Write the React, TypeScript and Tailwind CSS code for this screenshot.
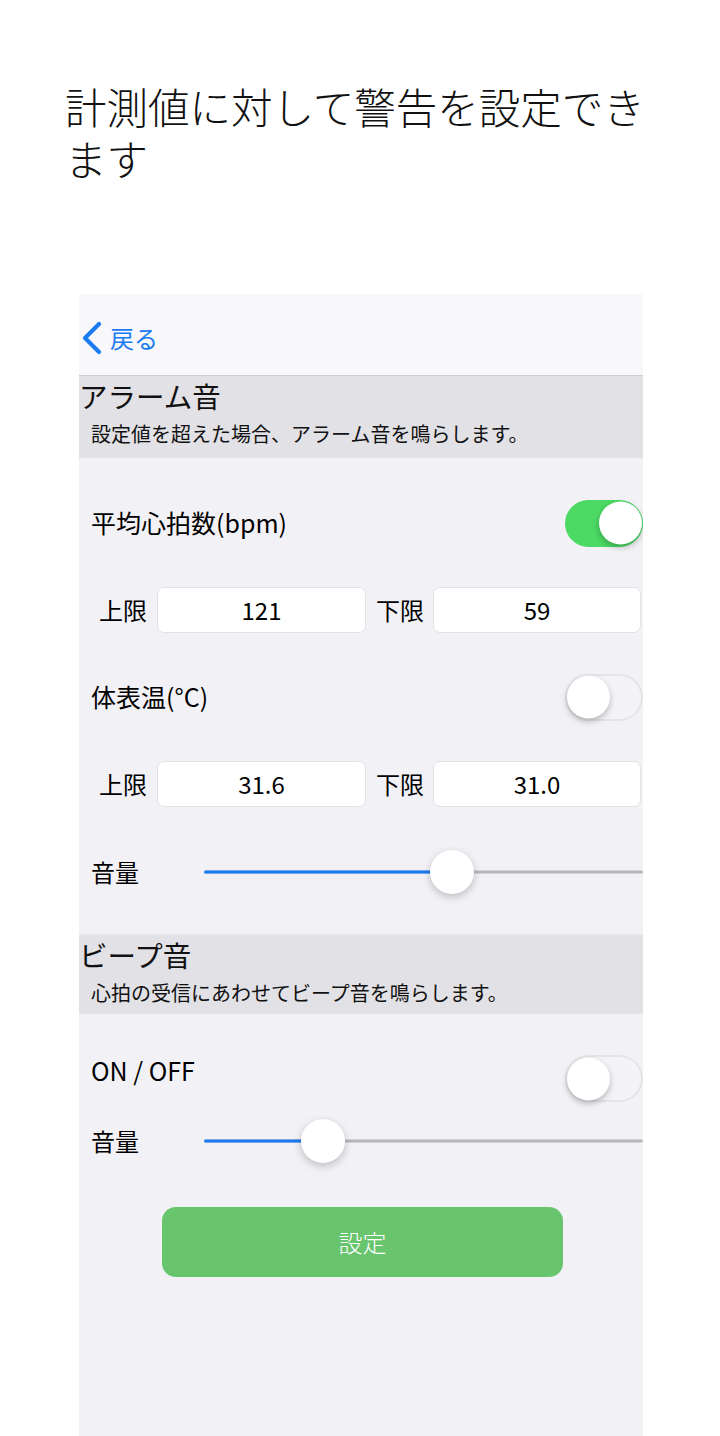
import React from 'react';

const font = { fontFamily: '"Noto Sans CJK JP", "Noto Sans", sans-serif' };

function Toggle({ on }: { on: boolean }) {
  return (
    <div
      className={`relative h-[47px] w-[78px] shrink-0 rounded-full ${
        on ? 'bg-[#4cd964]' : 'border-2 border-[#e5e4e9] bg-[#f4f3f7]'
      }`}
    >
      <div
        className={`absolute top-1/2 h-[43px] w-[43px] -translate-y-1/2 rounded-full bg-white shadow-[0_3px_6px_rgba(0,0,0,0.25)] ${
          on ? 'right-[1px]' : 'left-0'
        }`}
      />
    </div>
  );
}

function Slider({ value }: { value: number }) {
  return (
    <div className="relative h-[46px] flex-1">
      <div className="absolute left-0 right-0 top-1/2 h-[3px] -translate-y-1/2 rounded-full bg-[#b7b6ba]" />
      <div
        className="absolute left-0 top-1/2 h-[3px] -translate-y-1/2 rounded-full bg-[#1a7bf3]"
        style={{ width: `${value * 100}%` }}
      />
      <div
        className="absolute top-1/2 h-[44px] w-[44px] -translate-x-1/2 -translate-y-1/2 rounded-full bg-white shadow-[0_3px_8px_rgba(0,0,0,0.22)]"
        style={{ left: `${value * 100}%` }}
      />
    </div>
  );
}

function LimitRow({ upper, lower }: { upper: string; lower: string }) {
  return (
    <div className="flex h-[46px] items-center pl-[20px] pr-[2px] text-[24px] text-black">
      <span className="w-[49px]">上限</span>
      <div className="ml-[9px] flex h-[46px] w-[209px] items-center justify-center rounded-[7px] border border-[#e2e1e5] bg-white">
        {upper}
      </div>
      <span className="ml-[10px] w-[48px]">下限</span>
      <div className="ml-[9px] flex h-[46px] flex-1 items-center justify-center rounded-[7px] border border-[#e2e1e5] bg-white">
        {lower}
      </div>
    </div>
  );
}

function SectionHeader({ title, note, height }: { title: string; note: string; height: string }) {
  return (
    <div className={`flex flex-col bg-[#e2e1e6] ${height}`}>
      <div className="mt-[2px] text-[28.5px] leading-[36px] text-[#111]">{title}</div>
      <div className="mt-[7px] pl-[12px] text-[20px] leading-[26px] text-[#111]">{note}</div>
    </div>
  );
}

export default function App() {
  return (
    <div className="min-h-[1436px] bg-white" style={font}>
      <div className="pl-[65px] pt-[80px]">
        <h1 className="w-[590px] text-[41.5px] font-light leading-[52px] text-[#111]">
          計測値に対して警告を設定できます
        </h1>
      </div>

      <div className="ml-[79px] mt-[110px] h-[1142px] w-[564px] overflow-hidden bg-[#f2f1f6]">
        {/* Nav bar */}
        <div className="flex h-[82px] items-center border-b border-[#cfced3] bg-[#f8f7f9] pl-[2px] pt-[7px]">
          <svg width="22" height="34" viewBox="0 0 22 34" fill="none">
            <path d="M18 3 L4 17 L18 31" stroke="#1a7bf3" strokeWidth="4.2" strokeLinecap="round" strokeLinejoin="round" />
          </svg>
          <span className="ml-[7px] text-[24px] text-[#1a7bf3]">戻る</span>
        </div>

        <SectionHeader title="アラーム音" note="設定値を超えた場合、アラーム音を鳴らします。" height="h-[82px]" />

        <div className="pt-[41px]">
          <div className="flex h-[48px] items-center justify-between pl-[12px] text-[25px] text-black">
            <span>平均心拍数(bpm)</span>
            <Toggle on />
          </div>
          <div className="mt-[40px]">
            <LimitRow upper="121" lower="59" />
          </div>
          <div className="mt-[40px] flex h-[48px] items-center justify-between pl-[12px] text-[25px] text-black">
            <span>体表温(°C)</span>
            <Toggle on={false} />
          </div>
          <div className="mt-[40px]">
            <LimitRow upper="31.6" lower="31.0" />
          </div>
          <div className="mt-[42px] flex items-center pl-[12px] text-[24px] text-black">
            <span className="w-[113px]">音量</span>
            <Slider value={0.565} />
          </div>
        </div>

        <div className="mt-[39px] border-t border-[#e9e8ec]">
          <SectionHeader title="ビープ音" note="心拍の受信にあわせてビープ音を鳴らします。" height="h-[79px]" />
        </div>

        <div className="pt-[41px]">
          <div className="flex h-[47px] items-center justify-between pl-[12px] text-[25px] text-black">
            <span className="mb-[16px]">ON / OFF</span>
            <Toggle on={false} />
          </div>
          <div className="mt-[16px] flex items-center pl-[12px] text-[24px] text-black">
            <span className="w-[113px]">音量</span>
            <Slider value={0.271} />
          </div>
          <div className="mt-[43px] flex justify-center pl-[3px]">
            <button className="flex h-[70px] w-[401px] items-center justify-center rounded-[14px] bg-[#68c46d] text-[24px] font-light text-white">
              設定
            </button>
          </div>
        </div>
      </div>
    </div>
  );
}
